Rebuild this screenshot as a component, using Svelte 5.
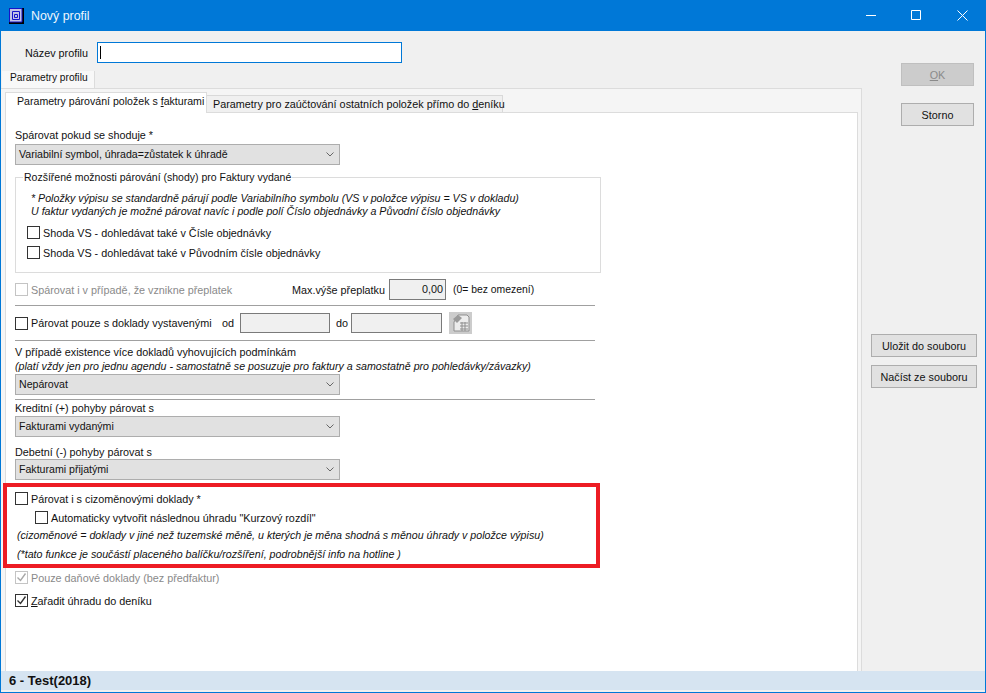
<script>
	const topChecks = ['Shoda VS - dohledávat také v Čísle objednávky', 'Shoda VS - dohledávat také v Původním čísle objednávky']
</script>

<div class="window">
	<header class="titlebar">
		<svg class="appicon" width="15" height="16" viewBox="0 0 15 16">
			<path d="M0 0h15v16H0z" fill="#000" />
			<path d="M.5.5h12.5v13.5H.5z" fill="#c3c3e6" stroke="#1414c8" />
			<path d="M3.5 3.5h7v8h-7z" fill="none" stroke="#1414c8" />
			<path d="M5.5 6.5h3v3h-3z" fill="none" stroke="#1414c8" />
		</svg>
		<span class="title">Nový profil</span>
		<svg class="winbtns" width="146" height="31" viewBox="0 0 146 31" fill="none" stroke="#fff">
			<path d="M26 15.5h10" />
			<path d="M71.5 10.5h9v9h-9z" />
			<path d="M117.5 10.5l10 10M127.5 10.5l-10 10" />
		</svg>
	</header>

	<div class="body">
		<div class="left">
			<div class="namerow">
				<label for="nazev">Název profilu</label>
				<div class="nameinput"><span class="caret"></span></div>
			</div>

			<div class="tab outertab">Parametry profilu</div>
			<div class="outerpanel">
				<div class="innertabs">
					<div class="tab active">Parametry párování položek s <u>f</u>akturami</div>
					<div class="tab other">Parametry pro zaúčtování ostatních položek přímo do <u>d</u>eníku</div>
				</div>
				<div class="innerpanel">
					<div class="line first">Spárovat pokud se shoduje *</div>
					<div class="select s1">Variabilní symbol, úhrada=zůstatek k úhradě<svg class="chev" width="8" height="5" viewBox="0 0 8 5" fill="none" stroke="#666"><path d="M.5.5L4 4 7.5.5" /></svg></div>

					<fieldset>
						<legend>Rozšířené možnosti párování (shody) pro Faktury vydané</legend>
						<div class="note">* Položky výpisu se standardně párují podle Variabilního symbolu (VS v položce výpisu = VS v dokladu)</div>
						<div class="note">U faktur vydaných je možné párovat navíc i podle polí Číslo objednávky a Původní číslo objednávky</div>
						{#each topChecks as c, i}
							<div class="check" class:gap1={i === 0} class:gap2={i === 1}><span class="box"></span>{c}</div>
						{/each}
					</fieldset>

					<div class="row r1">
						<div class="check dis"><span class="box"></span>Spárovat i v případě, že vznikne přeplatek</div>
						<span class="maxlabel">Max.výše přeplatku</span>
						<div class="field amount">0,00</div>
						<span class="hint">(0= bez omezení)</span>
					</div>
					<div class="sep s-a"></div>
					<div class="row r2">
						<div class="check"><span class="box"></span>Párovat pouze s doklady vystavenými</div>
						<span class="od">od</span>
						<div class="field d1"></div>
						<span class="do">do</span>
						<div class="field d2"></div>
						<div class="calbtn">
							<svg width="19" height="19" viewBox="0 0 19 19">
								<path d="M7 1h9l2 2v14H3V8z" fill="#ececec" stroke="#8f8f8f" />
								<path d="M9 9h8M9 12h8M9 15h8M11 8v9M14 8v9" stroke="#8f8f8f" />
								<path d="M2 5l5-4 4 3-5 5z" fill="#9a9a9a" />
							</svg>
						</div>
					</div>
					<div class="sep s-b"></div>
					<div class="line l3">V případě existence více dokladů vyhovujících podmínkám</div>
					<div class="note nl">(platí vždy jen pro jednu agendu - samostatně se posuzuje pro faktury a samostatně pro pohledávky/závazky)</div>
					<div class="select s2">Nepárovat<svg class="chev" width="8" height="5" viewBox="0 0 8 5" fill="none" stroke="#666"><path d="M.5.5L4 4 7.5.5" /></svg></div>
					<div class="sep s-c"></div>
					<div class="line l4">Kreditní (+) pohyby párovat s</div>
					<div class="select s3">Fakturami vydanými<svg class="chev" width="8" height="5" viewBox="0 0 8 5" fill="none" stroke="#666"><path d="M.5.5L4 4 7.5.5" /></svg></div>
					<div class="line l5">Debetní (-) pohyby párovat s</div>
					<div class="select s4">Fakturami přijatými<svg class="chev" width="8" height="5" viewBox="0 0 8 5" fill="none" stroke="#666"><path d="M.5.5L4 4 7.5.5" /></svg></div>

					<div class="redbox">
						<div class="check c1"><span class="box"></span>Párovat i s cizoměnovými doklady *</div>
						<div class="check c2"><span class="box"></span>Automaticky vytvořit následnou úhradu "Kurzový rozdíl"</div>
						<div class="note n1">(cizoměnové = doklady v jiné než tuzemské měně, u kterých je měna shodná s měnou úhrady v položce výpisu)</div>
						<div class="note n2">(*tato funkce je součástí placeného balíčku/rozšíření, podrobnější info na hotline )</div>
					</div>

					<div class="check dis c3"><span class="box"><svg width="11" height="11" viewBox="0 0 11 11" fill="none" stroke="#a8a8a8" stroke-width="1.4"><path d="M1.5 5.5l3 3 5-7" /></svg></span>Pouze daňové doklady (bez předfaktur)</div>
					<div class="check c4"><span class="box"><svg width="11" height="11" viewBox="0 0 11 11" fill="none" stroke="#333" stroke-width="1.4"><path d="M1.5 5.5l3 3 5-7" /></svg></span><span><u>Z</u>ařadit úhradu do deníku</span></div>
				</div>
			</div>
		</div>

		<aside class="side">
			<button class="btn ok" disabled><u>O</u>K</button>
			<button class="btn storno">Storno</button>
			<button class="btn wide save">Uložit do souboru</button>
			<button class="btn wide load">Načíst ze souboru</button>
		</aside>
	</div>

	<footer class="status">6 - Test(2018)</footer>
</div>

<style>
	:global(body) {
		margin: 0;
		background: #f0f0f0;
	}

	.window {
		box-sizing: border-box;
		width: 986px;
		height: 693px;
		display: flex;
		flex-direction: column;
		border: 1px solid #0078d7;
		border-top: none;
		overflow: hidden;
		font-family: "Liberation Sans", Arial, sans-serif;
		font-size: 10.8px;
		color: #111;
		background: #f0f0f0;
	}

	.titlebar {
		flex: none;
		height: 31px;
		background: #0078d7;
		display: flex;
		align-items: center;
		position: relative;
		color: #fff;
	}

	.appicon {
		margin-left: 8px;
		flex: none;
	}

	.title {
		margin-left: 7px;
		font-size: 12.4px;
		color: #eef6fd;
	}

	.winbtns {
		position: absolute;
		right: -1px;
		top: 0;
	}

	.body {
		flex: 1;
		min-height: 0;
		display: flex;
	}

	.left {
		width: 861px;
		flex: none;
		display: flex;
		flex-direction: column;
	}

	.namerow {
		display: flex;
		align-items: center;
		height: 21px;
		margin-top: 11px;
	}

	.namerow label {
		width: 63px;
		margin-left: 24px;
		white-space: nowrap;
	}

	.nameinput {
		box-sizing: border-box;
		width: 305px;
		height: 21px;
		margin-left: 9px;
		background: #fff;
		border: 1px solid #0078d7;
		padding: 3px 2px;
	}

	.caret {
		display: block;
		width: 1px;
		height: 13px;
		background: #000;
	}

	.tab {
		box-sizing: border-box;
		white-space: nowrap;
	}

	.outertab {
		width: 93px;
		height: 17px;
		margin: 8px 0 0 1px;
		padding: 1px 0 0 8px;
		background: #f8f8f8;
		border-right: 1px solid #dcdcdc;
		font-size: 10.2px;
	}

	.outerpanel {
		flex: 1;
		min-height: 0;
		box-sizing: border-box;
		background: #f5f5f5;
		border-top: 1px solid #dcdcdc;
		border-right: 1px solid #dcdcdc;
		padding: 3px 3px 0 4px;
		display: flex;
		flex-direction: column;
	}

	.innertabs {
		display: flex;
		align-items: flex-end;
		height: 20px;
		position: relative;
		z-index: 1;
	}

	.innertabs .active {
		width: 202px;
		height: 21px;
		background: #fff;
		border: 1px solid #dcdcdc;
		border-bottom: none;
		padding: 2px 0 0 11px;
		margin-bottom: -1px;
		font-size: 10.6px;
	}

	.innertabs .other {
		width: 296px;
		height: 17px;
		background: #f0f0f0;
		border: 1px solid #d9d9d9;
		border-left: none;
		border-bottom: none;
		padding: 2px 0 0 6px;
	}

	.innerpanel {
		flex: 1;
		min-height: 0;
		box-sizing: border-box;
		background: #fff;
		border: 1px solid #dcdcdc;
		border-bottom: none;
		padding: 15px 0 0 9px;
	}

	.line {
		height: 14px;
		line-height: 14px;
		white-space: nowrap;
	}

	.select {
		box-sizing: border-box;
		width: 325px;
		height: 21px;
		line-height: 19px;
		background: #e1e1e1;
		border: 1px solid #adadad;
		padding-left: 3px;
		font-size: 10.6px;
		display: flex;
		justify-content: space-between;
		align-items: center;
	}

	.chev {
		margin-right: 5px;
	}

	.s1 {
		margin-top: 2px;
	}

	fieldset {
		box-sizing: border-box;
		width: 586px;
		height: 103px;
		margin: 5px 0 0;
		padding: 8px 11px 0;
		border: 1px solid #dcdcdc;
	}

	legend {
		padding: 0 1px;
		margin-left: -4px;
		line-height: 14px;
		font-size: 10.5px;
	}

	.note {
		height: 13px;
		line-height: 13px;
		font-style: italic;
		font-size: 10.65px;
		white-space: nowrap;
	}

	fieldset .note {
		margin-left: 4px;
	}

	.check {
		display: flex;
		align-items: center;
		height: 13px;
		white-space: nowrap;
	}

	.box {
		box-sizing: border-box;
		flex: none;
		width: 13px;
		height: 13px;
		margin-right: 3px;
		background: #fff;
		border: 1px solid #333;
		display: flex;
		align-items: center;
		justify-content: center;
	}

	.box svg {
		display: block;
	}

	.dis {
		color: #8a8a8a;
	}

	.dis .box {
		border-color: #c4c4c4;
	}

	.gap1 {
		margin-top: 8px;
	}

	.gap2 {
		margin-top: 7px;
	}

	.row {
		display: flex;
		align-items: center;
		width: 586px;
	}

	.r1 {
		height: 21px;
		margin-top: 6px;
	}

	.r1 .check {
		width: 277px;
	}

	.maxlabel {
		width: 97px;
		white-space: nowrap;
	}

	.field {
		box-sizing: border-box;
		height: 100%;
		background: #f0f0f0;
		border: 1px solid #7a7a7a;
	}

	.amount {
		width: 57px;
		text-align: right;
		line-height: 18px;
		padding-right: 2px;
	}

	.hint {
		margin-left: 7px;
		font-size: 10.4px;
	}

	.sep {
		width: 580px;
		height: 1px;
		background: #a0a0a0;
	}

	.s-a {
		margin-top: 5px;
	}

	.r2 {
		height: 20px;
		margin-top: 7px;
	}

	.r2 .check {
		width: 207px;
	}

	.od {
		width: 18px;
	}

	.d1 {
		width: 90px;
	}

	.do {
		margin-left: 6px;
		width: 15px;
	}

	.d2 {
		width: 91px;
	}

	.calbtn {
		box-sizing: border-box;
		flex: none;
		width: 23px;
		height: 22px;
		margin-left: 7px;
		background: #ccc;
		display: flex;
		align-items: center;
		justify-content: center;
	}

	.s-b {
		margin-top: 7px;
	}

	.l3 {
		margin-top: 4px;
	}

	.nl {
		margin-top: 1px;
	}

	.s2 {
		margin-top: 1px;
	}

	.s-c {
		margin-top: 4px;
	}

	.l4 {
		margin-top: 1px;
	}

	.s3 {
		margin-top: 1px;
	}

	.l5 {
		margin-top: 8px;
	}

	.redbox {
		box-sizing: border-box;
		width: 597px;
		height: 85px;
		margin: 3px 0 0 -12px;
		border: 4px solid #ed1c24;
		padding: 5px 0 0 8px;
	}

	.c2 {
		margin: 6px 0 0 20px;
	}

	.n1 {
		margin: 5px 0 0 2px;
	}

	.n2 {
		margin: 6px 0 0 2px;
	}

	.c3 {
		margin-top: 3px;
	}

	.c4 {
		margin-top: 10px;
	}

	.side {
		flex: 1;
		position: relative;
		display: flex;
		flex-direction: column;
		align-items: flex-end;
		padding: 32px 11px 0 0;
	}

	.btn {
		box-sizing: border-box;
		width: 73px;
		height: 23px;
		padding: 0;
		font: inherit;
		color: #111;
		background: #e1e1e1;
		border: 1px solid #adadad;
	}

	.ok {
		background: #ccc;
		border-color: #bfbfbf;
		color: #8a8a8a;
	}

	.storno {
		margin-top: 17px;
	}

	.wide {
		width: 106px;
		margin-right: -3px;
	}

	.save {
		margin-top: 208px;
	}

	.load {
		margin-top: 8px;
	}

	.status {
		flex: none;
		height: 19px;
		margin-bottom: 2px;
		background: #d6e4f1;
		font-weight: bold;
		font-size: 13px;
		line-height: 19px;
		padding-left: 8px;
	}
</style>
